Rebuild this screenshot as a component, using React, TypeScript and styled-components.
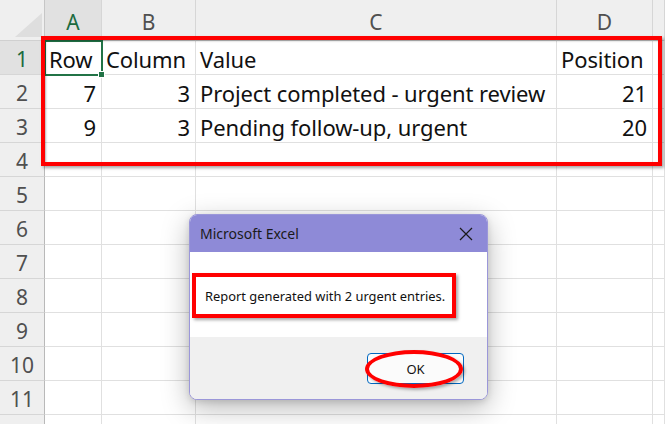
import React from 'react';
import styled, { createGlobalStyle } from 'styled-components';

// Datos de la hoja
type Row = { row: string | number; column: string | number; value: string; position: string | number; header?: boolean };

const rows: Row[] = [
    { row: 'Row', column: 'Column', value: 'Value', position: 'Position', header: true },
    { row: 7, column: 3, value: 'Project completed - urgent review', position: 21 },
    { row: 9, column: 3, value: 'Pending follow-up, urgent', position: 20 },
];

const VISIBLE_ROWS = 11;
const COLS = ['A', 'B', 'C', 'D', ''];

const GlobalStyle = createGlobalStyle`
    html, body {
        margin: 0;
        padding: 0;
        background: #ffffff;
        overflow: hidden;
    }
    body {
        font-family: 'Noto Sans', 'Liberation Sans', sans-serif;
    }
`;

const Sheet = styled.div`
    position: relative;
    width: 665px;
    height: 424px;
    overflow: hidden;
    display: grid;
    grid-template-columns: 45px 57px 94px 361px 96px 1fr;
    grid-template-rows: 41px repeat(${VISIBLE_ROWS + 1}, 34px);
    background: #ffffff;
`;

const Corner = styled.div`
    background: #efefef;
    border-right: 1px solid #c6c6c6;
    border-bottom: 1px solid #d0d0d0;
    position: relative;
    &::after {
        content: '';
        position: absolute;
        right: 2px;
        bottom: 3px;
        width: 0;
        height: 0;
        border-left: 27px solid transparent;
        border-bottom: 24px solid #dedede;
    }
`;

const ColHeader = styled.div<{ $active?: boolean }>`
    background: ${(p) => (p.$active ? '#e1e1e1' : '#efefef')};
    color: ${(p) => (p.$active ? '#1b6b3f' : '#505050')};
    border-right: 1px solid #d6d6d6;
    border-bottom: 1px solid #d0d0d0;
    display: flex;
    align-items: flex-end;
    justify-content: center;
    padding-bottom: 4px;
    box-sizing: border-box;
    font-size: 21px;
`;

const RowHeader = styled.div<{ $active?: boolean }>`
    background: ${(p) => (p.$active ? '#e1e1e1' : '#efefef')};
    color: ${(p) => (p.$active ? '#1b6b3f' : '#505050')};
    border-right: 1px solid #b9b9b9;
    border-bottom: 1px solid #d6d6d6;
    display: flex;
    align-items: center;
    justify-content: center;
    font-size: 21px;
    box-sizing: border-box;
    padding-top: 2px;
`;

const Cell = styled.div<{ $align?: 'left' | 'right'; $selected?: boolean }>`
    position: relative;
    border-right: 1px solid #e0e0e0;
    border-bottom: 1px solid #e0e0e0;
    box-sizing: border-box;
    display: flex;
    align-items: center;
    justify-content: ${(p) => (p.$align === 'right' ? 'flex-end' : 'flex-start')};
    padding: 2px 5px 0 4px;
    font-size: 22px;
    letter-spacing: -0.1px;
    color: #111111;
    white-space: nowrap;
    ${(p) =>
        p.$selected &&
        `
        outline: 2px solid #217346;
        outline-offset: -1px;
        z-index: 1;
        &::after {
            content: '';
            position: absolute;
            right: -4px;
            bottom: -4px;
            width: 5px;
            height: 5px;
            background: #217346;
            border: 1px solid #fff;
        }
    `}
`;

// Marco rojo de anotación sobre la tabla
const TableMark = styled.div`
    position: absolute;
    left: 41px;
    top: 36px;
    width: 613px;
    height: 122px;
    border: 4px solid #ff0000;
    box-shadow: 2px 2px 3px rgba(0, 0, 0, 0.35), inset 1px 1px 2px rgba(0, 0, 0, 0.3);
    pointer-events: none;
    z-index: 2;
`;

const Dialog = styled.div`
    position: absolute;
    left: 189px;
    top: 214px;
    width: 299px;
    height: 186px;
    border: 1px solid #9b97d9;
    border-radius: 8px;
    overflow: hidden;
    background: #ffffff;
    box-shadow: 0 8px 28px rgba(0, 0, 0, 0.28), 0 2px 6px rgba(0, 0, 0, 0.12);
    display: flex;
    flex-direction: column;
    z-index: 3;
    box-sizing: border-box;
    font-family: 'Noto Sans', 'Liberation Sans', sans-serif;
`;

const TitleBar = styled.div`
    height: 37px;
    background: #8e8ad7;
    display: flex;
    align-items: center;
    justify-content: space-between;
    padding: 0 14px 0 10px;
    color: #1a1a1a;
    font-size: 14px;
    flex-shrink: 0;
`;

const Body = styled.div`
    height: 85px;
    background: #ffffff;
    padding: 21px 0 0 2px;
    box-sizing: border-box;
`;

const Message = styled.div`
    display: inline-flex;
    align-items: center;
    width: 264px;
    height: 45px;
    box-sizing: border-box;
    border: 4px solid #ff0000;
    box-shadow: 2px 2px 3px rgba(0, 0, 0, 0.35);
    padding-left: 9px;
    font-size: 12.9px;
    color: #111111;
    white-space: nowrap;
`;

const Footer = styled.div`
    flex: 1;
    background: #f0f0f0;
    display: flex;
    justify-content: flex-end;
    align-items: flex-start;
    padding: 16px 23px 0 0;
`;

const OkButton = styled.button`
    position: relative;
    width: 97px;
    height: 31px;
    background: #fbfbfb;
    border: 1px solid #0067c0;
    border-radius: 4px;
    font-family: 'Noto Sans', 'Liberation Sans', sans-serif;
    font-size: 13px;
    color: #111111;
    padding: 0;
    &::after {
        content: '';
        position: absolute;
        left: -3px;
        top: -4px;
        width: 98px;
        height: 38px;
        border: 4px solid #ff0000;
        border-radius: 50%;
        box-shadow: 2px 2px 3px rgba(0, 0, 0, 0.3);
        box-sizing: border-box;
    }
`;

const CloseIcon = () => (
    <svg width="14" height="14" viewBox="0 0 14 14">
        <path d="M1 1 L13 13 M13 1 L1 13" stroke="#1a1a1a" strokeWidth="1.2" fill="none" />
    </svg>
);

export default function App() {
    const cellsFor = (r: number) => {
        const data = rows[r - 1];
        if (!data) return COLS.map((c, i) => <Cell key={i} />);
        const num = !data.header;
        return [
            <Cell key="a" $align={num ? 'right' : 'left'} $selected={r === 1}>{data.row}</Cell>,
            <Cell key="b" $align={num ? 'right' : 'left'}>{data.column}</Cell>,
            <Cell key="c">{data.value}</Cell>,
            <Cell key="d" $align={num ? 'right' : 'left'}>{data.position}</Cell>,
            <Cell key="e" />,
        ];
    };

    return (
        <>
            <GlobalStyle />
            <Sheet>
                <Corner />
                {COLS.map((c, i) => (
                    <ColHeader key={i} $active={c === 'A'}>{c}</ColHeader>
                ))}
                {Array.from({ length: VISIBLE_ROWS + 1 }, (_, i) => i + 1).map((r) => (
                    <React.Fragment key={r}>
                        {/* la fila 12 queda cortada por el borde: sin número */}
                        <RowHeader $active={r === 1}>{r <= VISIBLE_ROWS ? r : ''}</RowHeader>
                        {cellsFor(r)}
                    </React.Fragment>
                ))}
                <TableMark />
                <Dialog>
                    <TitleBar>
                        <span>Microsoft Excel</span>
                        <CloseIcon />
                    </TitleBar>
                    <Body>
                        <Message>Report generated with 2 urgent entries.</Message>
                    </Body>
                    <Footer>
                        <OkButton>OK</OkButton>
                    </Footer>
                </Dialog>
            </Sheet>
        </>
    );
}
